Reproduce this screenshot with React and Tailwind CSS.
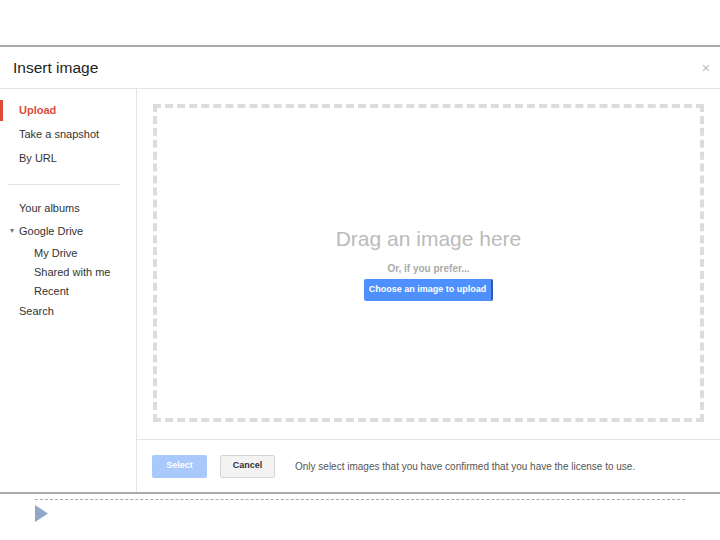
import React from 'react';

const SideItem = ({ label, active, indent, caret }) => (
  <div className="relative h-[19px] flex items-center">
    {active && <div className="absolute left-0 top-[-1px] w-[3px] h-[21px] bg-[#dd4b39]" />}
    {caret && <span className="absolute left-[10px] top-[3px] text-[8px] text-[#777]">▾</span>}
    <span
      className={`${indent ? 'pl-[34px]' : 'pl-[19px]'} text-[11px] ${
        active ? 'font-bold text-[#dd4b39]' : 'text-[#333]'
      }`}
    >
      {label}
    </span>
  </div>
);

const App = () => {
  return (
    <div className="w-[720px] h-[540px] bg-white font-['Liberation_Sans',Arial,sans-serif] overflow-hidden">
      {/* top blank area */}
      <div className="h-[45px]" />

      {/* dialog */}
      <div className="border-t-2 border-[#aaa] h-[447px] flex flex-col">
        {/* Header */}
        <div className="h-[42px] flex items-center justify-between pl-[13px] pr-[10px] border-b border-[#e5e5e5]">
          <h1 className="text-[15.5px] text-[#222] pt-[1px]">Insert image</h1>
          <span className="text-[14px] text-[#bbb] leading-none">×</span>
        </div>

        {/* Body */}
        <div className="flex flex-1">
          {/* Sidebar */}
          <div className="w-[137px] border-r border-[#e5e5e5] pt-[12px]">
            <div className="flex flex-col gap-[5px]">
              <SideItem label="Upload" active />
              <SideItem label="Take a snapshot" />
              <SideItem label="By URL" />
            </div>
            <div className="mx-[8px] w-[112px] border-t border-[#e5e5e5] mt-[16px] mb-[14px]" />
            <div className="flex flex-col">
              <div className="mb-[4px]"><SideItem label="Your albums" /></div>
              <div className="mb-[3px]"><SideItem label="Google Drive" caret /></div>
              <SideItem label="My Drive" indent />
              <SideItem label="Shared with me" indent />
              <SideItem label="Recent" indent />
              <div className="mt-[1px]"><SideItem label="Search" /></div>
            </div>
          </div>

          {/* Main */}
          <div className="flex-1 flex flex-col">
            <div className="h-[350px] pt-[15px] pb-[17px] px-[16px] flex">
              <div className="flex-1 border-[4px] border-dashed border-[#dcdcdc] flex flex-col items-center justify-center pt-[2px]">
                <div className="text-[21px] text-[#bbb] leading-none mb-[12px]">Drag an image here</div>
                <div className="text-[10px] font-bold text-[#aaa] mb-[3px]">Or, if you prefer...</div>
                <button className="h-[22px] px-[5px] bg-[#4d90fe] border-r-2 border-[#2f5bb7] text-white text-[9px] font-bold rounded-[2px]">
                  Choose an image to upload
                </button>
              </div>
            </div>

            {/* Footer */}
            <div className="flex-1 border-t border-[#e5e5e5] flex items-center pl-[15px]">
              <button className="w-[55px] h-[23px] bg-[#a9c8fb] text-white text-[9px] font-bold rounded-[2px]">
                Select
              </button>
              <button className="ml-[13px] w-[55px] h-[23px] bg-[#f3f3f3] border border-[#d5d5d5] text-[#333] text-[9px] font-bold rounded-[2px]">
                Cancel
              </button>
              <span className="ml-[20px] text-[10px] text-[#555]">
                Only select images that you have confirmed that you have the license to use.
              </span>
            </div>
          </div>
        </div>
      </div>

      {/* bottom rule */}
      <div className="border-t-2 border-[#aaa]" />
      <div className="ml-[35px] w-[650px] mt-[5px] border-t border-dashed border-[#aaa]" />
      <div className="ml-[35px] mt-[5px]">
        <svg width="13" height="17" viewBox="0 0 13 17">
          <polygon points="0,0 13,8.5 0,17" fill="#8fa8c8" />
        </svg>
      </div>
    </div>
  );
};

export default App;
